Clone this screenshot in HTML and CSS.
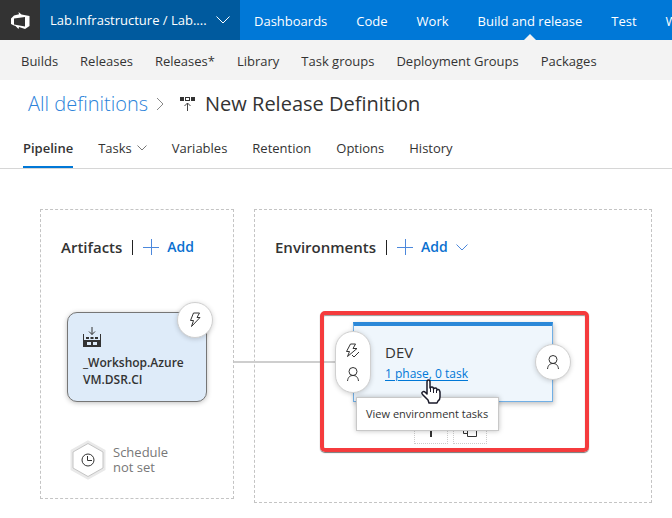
FILE: index.html
```html
<!DOCTYPE html>
<html lang="en">
<head>
<meta charset="utf-8">
<title>New Release Definition</title>
<link rel="stylesheet" href="styles.css">
</head>
<body>
<header class="topbar">
  <a class="logo" href="#" aria-label="Home">
    <svg width="20" height="20" viewBox="0 0 20 20"><path fill="#fff" fill-rule="evenodd" d="M8.500 2 11.500 4.500 19.500 6v10L15 19l-6-2-.5 2L5.500 16 4 15.500 1 14V8.500L4 5.500l5-1.200zM4 8.500v6L15 16.500v-9.500z"/></svg>
  </a>
  <button class="project" type="button">
    <span>Lab.Infrastructure / Lab....</span>
    <svg class="line" width="14" height="8" viewBox="0 0 14 8"><path d="M.5.5 7 7 13.500.5"/></svg>
  </button>
  <nav class="hubs">
    <a href="#">Dashboards</a>
    <a href="#">Code</a>
    <a href="#">Work</a>
    <a class="current" href="#">Build and release</a>
    <a href="#">Test</a>
    <a href="#">Wiki</a>
  </nav>
</header>
<nav class="subnav">
  <a href="#">Builds</a>
  <a href="#">Releases</a>
  <a href="#">Releases*</a>
  <a href="#">Library</a>
  <a href="#">Task groups</a>
  <a href="#">Deployment Groups</a>
  <a href="#">Packages</a>
</nav>
<main>
  <div class="title">
    <a href="#">All definitions</a>
    <svg class="line crumb" width="8" height="14" viewBox="0 0 8 14"><path d="M1 1l6 6-6 6"/></svg>
    <svg class="release" width="16" height="16" viewBox="0 0 16 16"><path fill="#333" fill-rule="evenodd" d="M0 1h4v4H0zM5 1h5v4H5zM6 2v2h3V2zM11 1h4v4h-4z"/><path fill="none" stroke="#444" d="M7.500 15V7M4.500 10l3-3 3 3"/></svg>
    <h1>New Release Definition</h1>
  </div>
  <nav class="tabs">
    <a class="selected" href="#">Pipeline</a>
    <a href="#">Tasks <svg class="line" width="10" height="6" viewBox="0 0 10 6"><path d="M.5.5 5 5 9.500.5"/></svg></a>
    <a href="#">Variables</a>
    <a href="#">Retention</a>
    <a href="#">Options</a>
    <a href="#">History</a>
  </nav>
  <div class="pipeline">
    <section class="panel artifacts">
      <div class="panel-head">
        <h2>Artifacts</h2>
        <button class="add" type="button"><svg class="line" width="16" height="16" viewBox="0 0 16 16"><path d="M8.500 0v16M0 8.500h16"/></svg>Add</button>
      </div>
      <div class="artifact">
        <svg width="18" height="20" viewBox="0 0 18 20"><path fill="#333" fill-rule="evenodd" d="M0 7h1v6h16V7h1v13H0zM4 15v3h4v-3zM10 15v3h4v-3zM3 10h3v2H3zM7.500 10h3v2h-3zM12 10h3v2h-3z"/><path fill="none" stroke="#333" d="M9 0v7.500M6 4.500l3 3 3-3"/></svg>
        <span>_Workshop.Azure VM.DSR.CI</span>
        <button class="badge trigger" type="button" aria-label="Continuous deployment trigger">
          <svg class="line" width="12" height="16" viewBox="0 0 12 16"><path d="M4.500 1h6L8 5.500h3L2.500 14.500l2-6H1.500z"/></svg>
        </button>
      </div>
      <button class="schedule" type="button">
        <svg width="36" height="40" viewBox="0 0 36 40"><path fill="#fff" stroke="#e9e9e9" stroke-width="3" d="M18 2 34 11v18L18 38 2 29V11z"/><path fill="#fff" stroke="#c4c4c4" d="M18 3.500 33 12v16L18 36.500 3 28V12z"/><circle cx="18" cy="20" r="6" fill="none" stroke="#333"/><path fill="none" stroke="#333" d="M17.500 16v4.500H22"/></svg>
        <span>Schedule<br>not set</span>
      </button>
    </section>
    <section class="panel environments">
      <div class="panel-head">
        <h2>Environments</h2>
        <button class="add" type="button"><svg class="line" width="16" height="16" viewBox="0 0 16 16"><path d="M8.500 0v16M0 8.500h16"/></svg>Add<svg class="line" width="12" height="7" viewBox="0 0 12 7"><path d="M.5.500 6 6 11.500.5"/></svg></button>
      </div>
      <div class="highlight">
        <div class="environment">
          <h3>DEV</h3>
          <a href="#">1 phase, 0 task</a>
          <button class="badge pre" type="button" aria-label="Pre-deployment conditions">
            <svg class="line" width="16" height="16" viewBox="0 0 16 16"><path d="M5.500 1h5L8 5.500h4L2.500 13.500l2-5H1.500zM7 12l2 2 5-5"/></svg>
            <svg class="line person" width="14" height="16" viewBox="0 0 14 16"><circle cx="7" cy="5.500" r="4"/><path d="M1.500 15C2 11 4 9.500 7 9.500S12 11 12.500 15"/></svg>
          </button>
          <button class="badge post" type="button" aria-label="Post-deployment conditions">
            <svg class="line person" width="14" height="16" viewBox="0 0 14 16"><circle cx="7" cy="5.500" r="4"/><path d="M1.500 15C2 11 4 9.500 7 9.500S12 11 12.500 15"/></svg>
          </button>
          <div class="actions">
            <button type="button" aria-label="Add environment"><svg class="line" width="16" height="20" viewBox="0 0 16 20"><path stroke-width="2" d="M8 5v15M1 12h14"/></svg></button>
            <button type="button" aria-label="Clone environment"><svg class="line" width="16" height="20" viewBox="0 0 16 20"><path d="M5.500 8.500h9v11h-9zM5 16.500H1.500v-11h9V8"/></svg></button>
          </div>
          <div class="tooltip" role="tooltip">View environment tasks</div>
          <svg class="pointer" width="20" height="25" viewBox="0 0 20 25"><path fill="#fff" stroke="#1a1a2a" stroke-width="1.500" stroke-linejoin="round" d="M6 15V3Q6 1 7.500 1T9 3v6Q9.500 8 11 8t1.500 2q.5-1 2-1t1.500 2q.5-.5 1.500-.5T19 13v5q0 3-2 4l-1 2H8l-1-3-5-5q-2-2-.5-3t3 .5z"/><path stroke="#1a1a2a" d="M9.500 9v4M12.500 10v4M15.500 11v3"/></svg>
        </div>
      </div>
    </section>
  </div>
</main>
</body>
</html>
```

FILE: styles.css
```css
* { box-sizing: border-box; }

body {
  margin: 0;
  background: #fff;
  color: #333;
  font: 13px/20px "Open Sans", "Noto Sans", sans-serif;
  overflow: hidden;
}

a { color: inherit; text-decoration: none; }
button { margin: 0; padding: 0; border: 0; background: none; color: inherit; font: inherit; text-align: left; }
h1, h2, h3 { margin: 0; }
svg { display: block; flex: none; }
.line { fill: none; stroke: currentColor; }

.topbar { display: flex; height: 40px; background: #0078d7; color: #fff; white-space: nowrap; }
.logo { display: flex; flex: none; align-items: center; justify-content: center; width: 40px; background: #333; }
.project { display: flex; flex: none; align-items: center; justify-content: space-between; width: 200px; padding: 0 10px; background: #005a9e; }
.hubs { display: flex; gap: 29px; padding-left: 14px; line-height: 42px; }
.current { position: relative; }
.current::after {
  content: "";
  position: absolute;
  bottom: 0;
  left: 50%;
  margin-left: -6px;
  border: 6px solid transparent;
  border-top: 0;
  border-bottom-color: #f3f3f3;
}

.subnav { display: flex; gap: 22px; height: 40px; padding-left: 21px; background: #f3f3f3; line-height: 42px; white-space: nowrap; }

.title { display: flex; align-items: center; height: 48px; padding-left: 28px; font-size: 20px; white-space: nowrap; }
.title a { color: #2b83da; font-weight: 300; }
.title h1 { font-size: 20px; font-weight: 400; }
.crumb { margin: 0 16px 0 8px; color: #888; }
.release { margin-right: 9px; }

.tabs { display: flex; gap: 25px; height: 41px; padding-left: 23px; border-bottom: 1px solid #d6d6d6; line-height: 42px; white-space: nowrap; }
.tabs a { display: flex; align-items: center; gap: 5px; height: 40px; }
.tabs .line { color: #777; }
.tabs .selected { border: solid transparent; border-width: 2px 0; border-bottom-color: #0078d7; font-weight: 600; }

.pipeline { display: flex; gap: 20px; padding: 40px 20px 15px 40px; align-items: flex-start; }
.panel { border: 1px dashed #c4c4c4; }
.artifacts { flex: none; width: 194px; height: 290px; }
.environments { position: relative; flex: 1; height: 294px; }
.panel-head { display: flex; align-items: center; padding: 27px 0 0 20px; }
.panel-head h2 { padding-right: 10px; font-size: 15px; font-weight: 600; line-height: 20px; }
.add { display: flex; align-items: center; gap: 8px; color: #0a70d0; font-size: 14px; font-weight: 600; }
.add::before { content: ""; width: 1px; height: 15px; margin-right: 2px; background: #222; }
.add .line { stroke: #4c88dc; }

.artifact {
  position: relative;
  width: 140px;
  height: 90px;
  margin: 55px 0 0 26px;
  padding: 14px 15px;
  border: 1px solid #767676;
  border-radius: 10px;
  background: #deebf9;
  box-shadow: 0 1px 5px rgb(0 0 0 / 25%);
  font-size: 12px;
  font-weight: 600;
  line-height: 17px;
}
.artifact span { display: block; margin-top: 7px; }

.badge {
  position: absolute;
  display: flex;
  flex-direction: column;
  align-items: center;
  justify-content: center;
  width: 36px;
  height: 36px;
  border: 1px solid #d0d0d0;
  border-radius: 18px;
  background: #fff;
  box-shadow: 0 1px 5px rgb(0 0 0 / 18%);
}
.trigger { top: -11px; right: -7px; }
.pre { top: 9px; left: -18px; height: 62px; gap: 7px; }
.post { top: 22px; right: -18px; }

.schedule { display: flex; align-items: center; gap: 7px; margin: 38px 0 0 29px; color: #777; line-height: 15px; }

.environments::before {
  content: "";
  position: absolute;
  top: 151px;
  left: -21px;
  width: 102px;
  height: 2px;
  background: #cecece;
}
.highlight {
  position: relative;
  width: 269px;
  margin: 54px 0 0 65px;
  padding: 7px 32px 46px 29px;
  border: 4px solid #f53b3d;
  border-radius: 5px;
  box-shadow: 0 1px 1px #777, inset 0 1px 1px #999;
}
.environment {
  position: relative;
  height: 80px;
  padding: 15px 31px;
  border: 1px solid #71afe5;
  border-top: 4px solid #2b88d8;
  background: #eff6fc;
  box-shadow: 1px 2px 5px rgb(0 0 0 / 25%);
}
.environment h3 { font-size: 15px; font-weight: 400; line-height: 22px; }
.environment > a { display: block; color: #0078d7; font-size: 12px; line-height: 22px; text-decoration: underline; text-underline-offset: 2px; white-space: nowrap; }
.environment .pre { top: 5px; left: -19px; }
.environment .post { top: 18px; right: -19px; }
.actions { position: absolute; top: 84px; left: 60px; display: flex; gap: 5px; }
.actions button { display: flex; justify-content: center; align-items: center; width: 34px; height: 34px; border: 1px dotted #ccc; }
.tooltip {
  position: absolute;
  top: 71px;
  left: 2px;
  padding: 7px 10px 7px 9px;
  border: 1px solid #c8c8c8;
  background: #fff;
  box-shadow: 0 0 5px rgb(0 0 0 / 25%);
  font-size: 11px;
  line-height: 18px;
  white-space: nowrap;
}
.tooltip::before {
  content: "";
  position: absolute;
  top: -8px;
  left: 64px;
  border: 8px solid transparent;
  border-top: 0;
  border-bottom-color: #fff;
}
.pointer { position: absolute; top: 53px; left: 67px; }
```
